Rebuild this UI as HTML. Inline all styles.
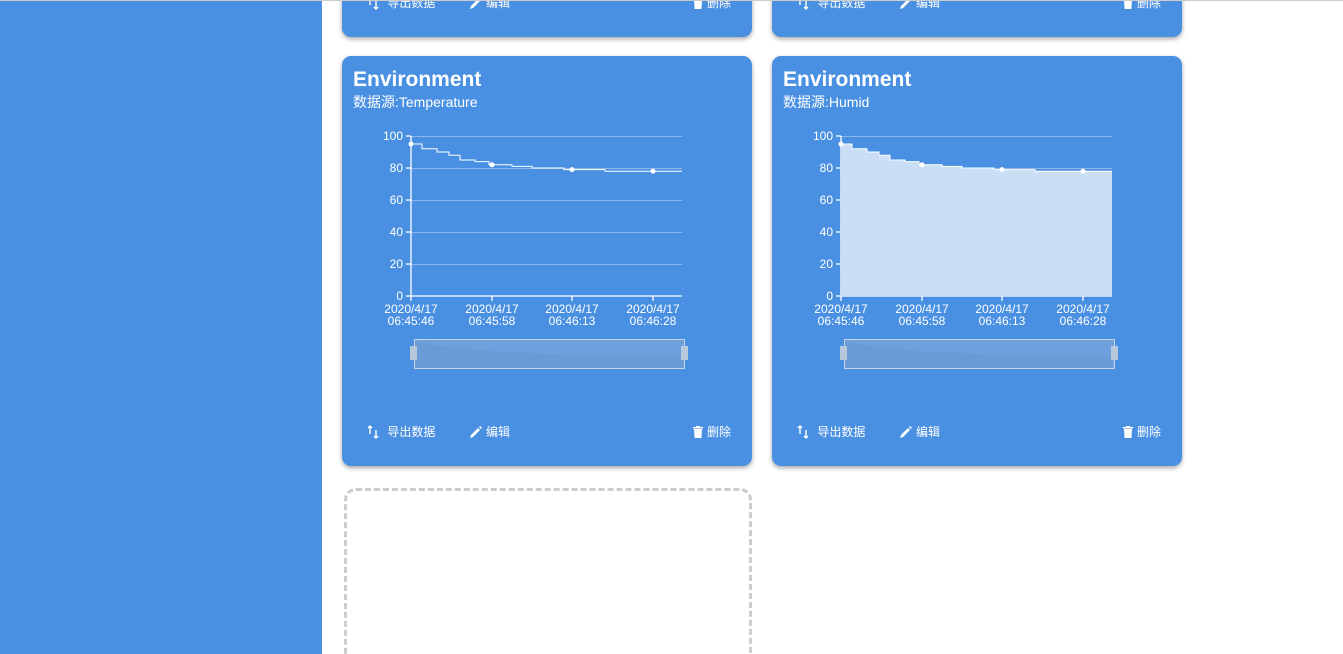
<!DOCTYPE html>
<html style="width:1343px;height:654px;overflow:hidden"><head><meta charset="utf-8"><style>
html,body{margin:0;width:1343px;height:654px;overflow:hidden;background:#fff}
body{font-family:"Liberation Sans","Noto Sans CJK SC",sans-serif}
.wrap{position:relative;width:1343px;height:654px;overflow:hidden}
.side{position:absolute;left:0;top:0;width:322px;height:654px;background:#4a90e2}
.topline{position:absolute;left:0;top:0;width:1343px;height:1px;background:#ccc;z-index:5}
.card{position:absolute;width:410px;height:410px;background:#4a90e2;border-radius:9px;box-shadow:0 2px 5px rgba(0,0,0,.35);color:#fff}
.card h2{position:absolute;left:11px;top:12px;margin:0;font-size:21px;font-weight:bold}
.card .sub{position:absolute;left:11px;top:36px;font-size:14px}
.foot{position:absolute;top:367px;font-size:12px;display:flex;align-items:center;gap:3px}
.foot svg{display:block}
svg text{font-family:"Liberation Sans",sans-serif;font-size:12px;fill:#fff}
.dash{position:absolute;left:344px;top:488px;width:402px;height:163px;border:3px dashed #ccc;border-bottom:none;border-radius:12px 12px 0 0}
</style></head><body><div class="wrap">
<div class="topline"></div>
<div class="side"></div>

<svg width="0" height="0" style="position:absolute"><defs>
<g id="exp"><path d="M3 1v8M1 3l2-2 2 2M9 13V5M7 11l2 2 2-2" stroke="#fff" stroke-width="1.4" fill="none"/></g>
<g id="pen"><path d="M1 13l1-3 7-7 2 2-7 7z M10 2l1-1 2 2-1 1z" fill="#fff"/></g>
<g id="bin"><path d="M1 2h10v1.5H1z M4 1h4v1H4z M2 4h8l-.6 9H2.6z" fill="#fff"/></g>
<g id="grid">
 <g stroke="#8fb6e6" stroke-width="1">
 <line x1="411" y1="136.5" x2="682" y2="136.5"/><line x1="411" y1="168.5" x2="682" y2="168.5"/>
 <line x1="411" y1="200.5" x2="682" y2="200.5"/><line x1="411" y1="232.5" x2="682" y2="232.5"/>
 <line x1="411" y1="264.5" x2="682" y2="264.5"/></g>
 <g stroke="#fff" stroke-width="1.3"><line x1="411" y1="136" x2="411" y2="296"/><line x1="411" y1="296" x2="682" y2="296"/>
 <line x1="406" y1="136" x2="411" y2="136"/><line x1="406" y1="168" x2="411" y2="168"/><line x1="406" y1="200" x2="411" y2="200"/><line x1="406" y1="232" x2="411" y2="232"/><line x1="406" y1="264" x2="411" y2="264"/><line x1="406" y1="296" x2="411" y2="296"/>
 <line x1="411" y1="296" x2="411" y2="301"/><line x1="492" y1="296" x2="492" y2="301"/><line x1="572" y1="296" x2="572" y2="301"/><line x1="653" y1="296" x2="653" y2="301"/></g>
 <g text-anchor="end"><text x="403" y="140">100</text><text x="403" y="172">80</text><text x="403" y="204">60</text><text x="403" y="236">40</text><text x="403" y="268">20</text><text x="403" y="300">0</text></g>
 <g text-anchor="middle"><text x="411" y="313">2020/4/17</text><text x="411" y="325">06:45:46</text>
 <text x="492" y="313">2020/4/17</text><text x="492" y="325">06:45:58</text>
 <text x="572" y="313">2020/4/17</text><text x="572" y="325">06:46:13</text>
 <text x="653" y="313">2020/4/17</text><text x="653" y="325">06:46:28</text></g>
 <rect x="414.5" y="339.5" width="270" height="29" fill="#7ca7dc" fill-opacity=".7" stroke="#c8d4e4"/>
 <path d="M415 342 L425 343 L430 345 L450 347 L475 350 L512 352 L564 355 L682 357 L682 368 L415 368Z" fill="#6b97cf" opacity=".6"/>
 <rect x="410" y="346" width="7" height="14" fill="#b8c7da"/><rect x="681" y="346" width="7" height="14" fill="#b8c7da"/>
</g>
</defs></svg>

<div class="card" style="left:342px;top:-373px">
 <div class="foot" style="left:25px"><svg width="14" height="14"><use href="#exp"/></svg>&nbsp;导出数据</div>
 <div class="foot" style="left:127px"><svg width="14" height="14"><use href="#pen"/></svg>编辑</div>
 <div class="foot" style="left:350px"><svg width="12" height="14"><use href="#bin"/></svg>删除</div>
</div>
<div class="card" style="left:772px;top:-373px">
 <div class="foot" style="left:25px"><svg width="14" height="14"><use href="#exp"/></svg>&nbsp;导出数据</div>
 <div class="foot" style="left:127px"><svg width="14" height="14"><use href="#pen"/></svg>编辑</div>
 <div class="foot" style="left:350px"><svg width="12" height="14"><use href="#bin"/></svg>删除</div>
</div>

<div class="card" style="left:342px;top:56px">
 <h2>Environment</h2><div class="sub">数据源:Temperature</div>
 <svg width="410" height="410" style="position:absolute;left:0;top:0" viewBox="342 56 410 410">
  <use href="#grid"/>
  <path d="M411 144H422V148.8H437V152H449V155.2H460V160H475V161.6H489V164.8H512V166.4H532V168H564V169.6H605V171.2H682" fill="none" stroke="#fff" stroke-width="1"/>
  <g fill="#fff"><circle cx="411" cy="144" r="2.5"/><circle cx="492" cy="164.8" r="2.5"/><circle cx="572" cy="169.6" r="2.5"/><circle cx="653" cy="171.2" r="2.5"/></g>
 </svg>
 <div class="foot" style="left:25px"><svg width="14" height="14"><use href="#exp"/></svg>&nbsp;导出数据</div>
 <div class="foot" style="left:127px"><svg width="14" height="14"><use href="#pen"/></svg>编辑</div>
 <div class="foot" style="left:350px"><svg width="12" height="14"><use href="#bin"/></svg>删除</div>
</div>

<div class="card" style="left:772px;top:56px">
 <h2>Environment</h2><div class="sub">数据源:Humid</div>
 <svg width="410" height="410" style="position:absolute;left:0;top:0" viewBox="342 56 410 410">
  <use href="#grid"/>
  <path d="M411 144H422V148.8H437V152H449V155.2H460V160H475V161.6H489V164.8H512V166.4H532V168H564V169.6H605V171.2H682V296H411Z" fill="#cadef6"/>
  <path d="M411 144H422V148.8H437V152H449V155.2H460V160H475V161.6H489V164.8H512V166.4H532V168H564V169.6H605V171.2H682" fill="none" stroke="#fff" stroke-width="1"/>
  <g fill="#fff"><circle cx="411" cy="144" r="2.5"/><circle cx="492" cy="164.8" r="2.5"/><circle cx="572" cy="169.6" r="2.5"/><circle cx="653" cy="171.2" r="2.5"/></g>
 </svg>
 <div class="foot" style="left:25px"><svg width="14" height="14"><use href="#exp"/></svg>&nbsp;导出数据</div>
 <div class="foot" style="left:127px"><svg width="14" height="14"><use href="#pen"/></svg>编辑</div>
 <div class="foot" style="left:350px"><svg width="12" height="14"><use href="#bin"/></svg>删除</div>
</div>

<div class="dash"></div>
</div></body></html>
